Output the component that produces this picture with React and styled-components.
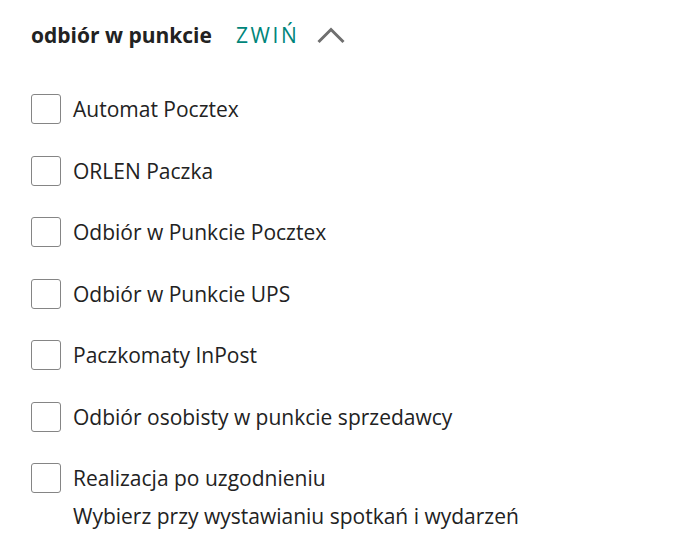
import React, { useState } from 'react';
import styled, { createGlobalStyle } from 'styled-components';

const Global = createGlobalStyle`
  body {
    margin: 0;
    background: #fff;
    font-family: "Open Sans", "Liberation Sans", sans-serif;
    color: #222;
  }
`;

const Panel = styled.div`
  padding: 21px 0 0 31px;
`;

const Header = styled.div`
  display: flex;
  align-items: center;
  height: 28px;
`;

const Title = styled.h3`
  margin: 0;
  font-size: 21px;
  font-weight: 700;
  line-height: 28px;
  color: #222;
`;

const Toggle = styled.button`
  display: flex;
  align-items: center;
  gap: 18px;
  margin-left: 24px;
  padding: 0;
  border: 0;
  background: none;
  cursor: pointer;
  font-family: inherit;
  font-size: 21px;
  line-height: 28px;
  letter-spacing: 2.6px;
  color: #00857a;
`;

const List = styled.ul`
  list-style: none;
  margin: 45px 0 0;
  padding: 0;
  display: flex;
  flex-direction: column;
  gap: 31.5px;
`;

const Item = styled.li`
  display: flex;
  align-items: flex-start;
  gap: 12px;
`;

const Box = styled.span`
  flex: none;
  box-sizing: border-box;
  width: 30px;
  height: 30px;
  border: 1px solid #858585;
  border-radius: 3px;
  background: ${p => (p.checked ? '#00857a' : '#fff')};
`;

const Label = styled.div`
  font-size: 21px;
  line-height: 30px;
  color: #222;
`;

const Hint = styled.div`
  margin-top: 8px;
`;

const options = [
  { name: 'Automat Pocztex' },
  { name: 'ORLEN Paczka' },
  { name: 'Odbiór w Punkcie Pocztex' },
  { name: 'Odbiór w Punkcie UPS' },
  { name: 'Paczkomaty InPost' },
  { name: 'Odbiór osobisty w punkcie sprzedawcy' },
  { name: 'Realizacja po uzgodnieniu', hint: 'Wybierz przy wystawianiu spotkań i wydarzeń' },
];

const Chevron = () => (
  <svg width="28" height="17" viewBox="0 0 28 17">
    <polyline points="1.5,15 14,2.5 26.5,15" fill="none" stroke="#6f6f6f" strokeWidth="3" />
  </svg>
);

export default function App() {
  const [checked, setChecked] = useState({});
  return (
    <Panel>
      <Global />
      <Header>
        <Title>odbiór w punkcie</Title>
        <Toggle>
          ZWIŃ
          <Chevron />
        </Toggle>
      </Header>
      <List>
        {options.map(o => (
          <Item key={o.name} onClick={() => setChecked({ ...checked, [o.name]: !checked[o.name] })}>
            <Box checked={checked[o.name]} />
            <Label>
              {o.name}
              {o.hint && <Hint>{o.hint}</Hint>}
            </Label>
          </Item>
        ))}
      </List>
    </Panel>
  );
}
